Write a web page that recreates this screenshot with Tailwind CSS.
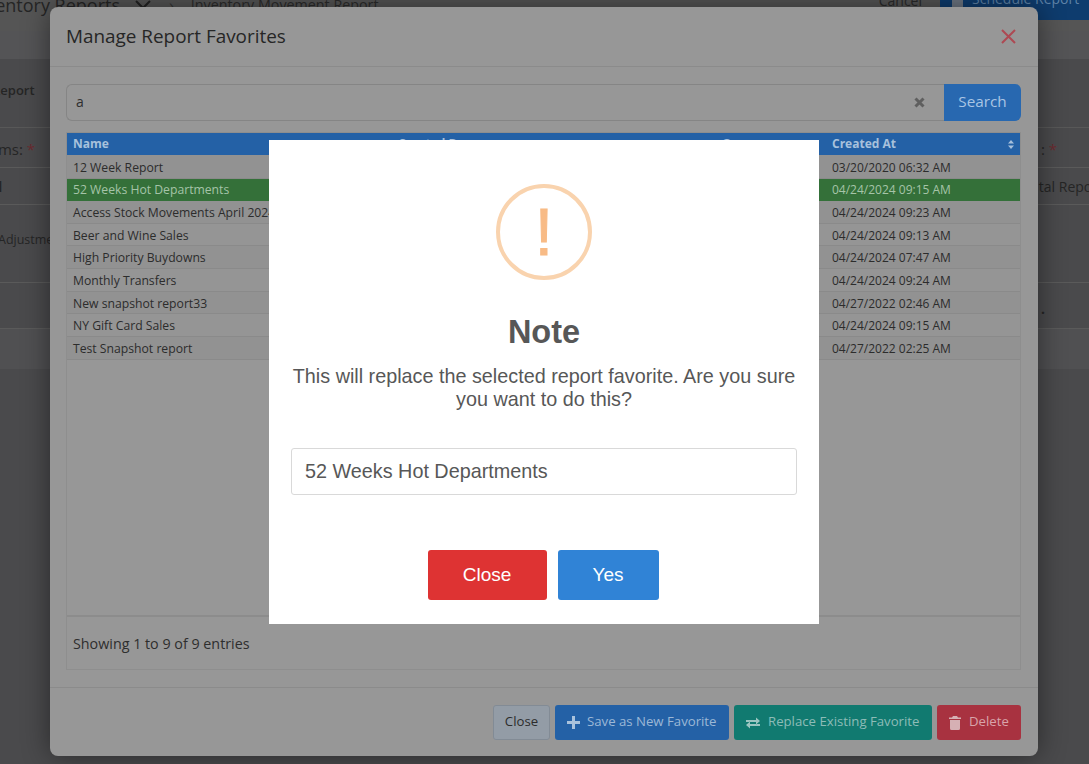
<!DOCTYPE html>
<html lang="en">
<head>
<meta charset="utf-8">
<title>Manage Report Favorites</title>
<script src="https://cdn.jsdelivr.net/npm/@tailwindcss/browser@4"></script>
</head>
<body class="m-0 bg-[#4a4a4c] font-['Open_Sans',sans-serif]">
<div class="relative w-[1089px] h-[764px] overflow-hidden bg-[#4a4a4c] text-[#252525]">

  <!-- dimmed page behind -->
  <div class="flex flex-col w-[1089px]">
    <div class="h-[31px] bg-[#555555] flex items-start justify-between overflow-hidden">
      <div class="flex items-center -mt-[9px] ml-[-38px] whitespace-nowrap">
        <span class="text-[18px] leading-[28px] w-[158px] text-right">Inventory Reports</span>
        <svg class="w-[16px] h-[10px] ml-[15px]" viewBox="0 0 16 10" fill="none" stroke="#222" stroke-width="2"><path d="M1 1l7 7 7-7"/></svg>
        <span class="ml-[18px] text-[#333]">›</span>
        <span class="ml-[17px] text-[14.300px] leading-[28px] text-[#2b2b2b]">Inventory Movement Report</span>
      </div>
      <div class="flex items-start whitespace-nowrap">
        <span class="text-[14px] leading-[20px] -mt-[9px] mr-[18px] text-[#2a2a2a]">Cancel</span>
        <span class="w-[149px] h-[20px] bg-[#0e3c6e] text-[#5f83a8] text-[14px] leading-[20px] overflow-hidden flex items-start">
          <span class="block ml-[12px] w-[11px] h-[7px] bg-[#6d7682] shrink-0"></span>
          <span class="block ml-[9px] -mt-[11px]">Schedule Report</span>
        </span>
      </div>
    </div>
    <div class="h-[28px] bg-[#545456]"></div>
    <div class="h-[69px] border-b border-[#585858] flex items-center text-[13px] font-semibold pb-[4px]"><span class="ml-[-8px]">Report</span></div>
    <div class="h-[40px] border-b border-[#5a5a5a] flex items-center justify-between text-[15px] leading-none pt-[4px]">
      <span class="ml-[-20px]">Items: <span class="text-[#6a2a30]">*</span></span>
      <span class="mr-[32px]">: <span class="text-[#6a2a30]">*</span></span>
    </div>
    <div class="h-[37px] border-b border-[#5a5a5a] flex items-center justify-between text-[14px] pt-[1px]">
      <span class="ml-[-2px] font-bold">l</span>
      <span class="mr-[-14px] whitespace-nowrap">tal Report</span>
    </div>
    <div class="h-[78px] border-b border-[#5a5a5a] text-[12.500px] pt-[26px] leading-[18px] whitespace-nowrap"><span class="ml-[-2px]">Adjustment</span></div>
    <div class="h-[46px] border-b border-[#5a5a5a] flex items-center justify-end text-[14px] font-bold pt-[6px]"><span class="mr-[44px]">.</span></div>
    <div class="h-[40px] bg-[#505052]"></div>
  </div>

  <!-- Manage Report Favorites modal -->
  <div class="absolute left-[50px] top-[7px] w-[988px] h-[749px] bg-[#979797] rounded-[8px] shadow-[0_0_28px_rgba(0,0,0,0.45)] flex flex-col">
    <div class="h-[60px] shrink-0 border-b border-[#8b8b8b] flex items-center justify-between pl-[16px] pr-[22px]">
      <h2 class="text-[18.900px] leading-none text-[#262626] font-normal">Manage Report Favorites</h2>
      <svg class="w-[15px] h-[15px]" viewBox="0 0 15 15" fill="none" stroke="#ad4953" stroke-width="2"><path d="M1 1l13 13M14 1L1 14"/></svg>
    </div>
    <div class="flex-1 flex flex-col pl-[16px] pr-[17px] pt-[17px]">
      <div class="flex h-[37px] shrink-0">
        <div class="flex-1 border border-[#858585] border-r-0 rounded-l-[6px] flex items-center justify-between pl-[9px] pr-[19px] text-[14px] text-[#2f2f2f]">
          <span class="-mt-[2px]">a</span>
          <svg class="w-[11px] h-[11px]" viewBox="0 0 11 11" fill="none" stroke="#5f5f5f" stroke-width="3"><path d="M1.500 1.500l8 8M9.500 1.500l-8 8"/></svg>
        </div>
        <button class="w-[77px] bg-[#2868b0] rounded-r-[6px] text-[#a9c5e4] text-[15.300px] pb-[2px]">Search</button>
      </div>
      <div class="mt-[11px] flex flex-col h-[538px] border border-[#8e8e8e]">
        <div class="grid grid-cols-[324px_326px_108px_1fr] h-[22px] bg-[#2461a6] text-[#a8c1dc] text-[12px] font-bold items-center shrink-0">
          <span class="pl-[6px]">Name</span>
          <span class="pl-[7px]">Created By</span>
          <span class="pl-[5px]">Owner</span>
          <span class="pl-[7px] flex items-center justify-between pr-[6px]">Created At
            <svg class="w-[6px] h-[9px]" viewBox="0 0 6 9" fill="#a8c1dc"><path d="M3 0l3 3.600H0zM3 9L0 5.400h6z"/></svg>
          </span>
        </div>
        <div class="grid grid-cols-[758px_1fr] h-[24px] items-center border-b border-[#8a8a8a] text-[12.200px] text-[#2c2c2c] bg-[#929292] pt-[3px]"><span class="pl-[6px]">12 Week Report</span><span class="pl-[7px] text-[12px]">03/20/2020 06:32 AM</span></div>
        <div class="grid grid-cols-[758px_1fr] h-[22px] items-center text-[12.200px] text-[#a5c4a8] bg-[#347039]"><span class="pl-[6px]">52 Weeks Hot Departments</span><span class="pl-[7px] text-[12px]">04/24/2024 09:15 AM</span></div>
        <div class="grid grid-cols-[758px_1fr] h-[23px] items-center border-b border-[#8a8a8a] text-[12.200px] text-[#2c2c2c] bg-[#929292] pt-[2px]"><span class="pl-[6px] whitespace-nowrap">Access Stock Movements April 2024</span><span class="pl-[7px] text-[12px]">04/24/2024 09:23 AM</span></div>
        <div class="grid grid-cols-[758px_1fr] h-[22px] items-center border-b border-[#8a8a8a] text-[12.200px] text-[#2c2c2c] bg-[#959595] pt-[3px]"><span class="pl-[6px]">Beer and Wine Sales</span><span class="pl-[7px] text-[12px]">04/24/2024 09:13 AM</span></div>
        <div class="grid grid-cols-[758px_1fr] h-[23px] items-center border-b border-[#8a8a8a] text-[12.200px] text-[#2c2c2c] bg-[#929292] pt-[2px]"><span class="pl-[6px]">High Priority Buydowns</span><span class="pl-[7px] text-[12px]">04/24/2024 07:47 AM</span></div>
        <div class="grid grid-cols-[758px_1fr] h-[23px] items-center border-b border-[#8a8a8a] text-[12.200px] text-[#2c2c2c] bg-[#959595] pt-[2px]"><span class="pl-[6px]">Monthly Transfers</span><span class="pl-[7px] text-[12px]">04/24/2024 09:24 AM</span></div>
        <div class="grid grid-cols-[758px_1fr] h-[22px] items-center border-b border-[#8a8a8a] text-[12.200px] text-[#2c2c2c] bg-[#929292] pt-[3px]"><span class="pl-[6px]">New snapshot report33</span><span class="pl-[7px] text-[12px]">04/27/2022 02:46 AM</span></div>
        <div class="grid grid-cols-[758px_1fr] h-[23px] items-center border-b border-[#8a8a8a] text-[12.200px] text-[#2c2c2c] bg-[#959595] pt-[2px]"><span class="pl-[6px]">NY Gift Card Sales</span><span class="pl-[7px] text-[12px]">04/24/2024 09:15 AM</span></div>
        <div class="grid grid-cols-[758px_1fr] h-[23px] items-center border-b border-[#8a8a8a] text-[12.200px] text-[#2c2c2c] bg-[#929292] pt-[2px]"><span class="pl-[6px]">Test Snapshot report</span><span class="pl-[7px] text-[12px]">04/27/2022 02:25 AM</span></div>
        <div class="flex-1"></div>
        <div class="h-[54px] shrink-0 border-t-2 border-[#8c8c8c] flex items-center pl-[6px] text-[14.300px] text-[#2e2e2e] pt-[2px]">Showing 1 to 9 of 9 entries</div>
      </div>
    </div>
    <div class="h-[69px] shrink-0 border-t border-[#8b8b8b] flex items-start justify-end gap-[5px] pr-[17px] pt-[17px] text-[13.200px]">
      <button class="h-[35px] w-[57px] rounded-[3px] border border-[#828b95] bg-[#939ca6] text-[#2c2c2c] pb-[2px]">Close</button>
      <button class="h-[35px] w-[174px] rounded-[3px] bg-[#2461a6] text-[#9cb8d6] flex items-center pl-[12px] gap-[7px] pb-[2px]">
        <svg class="w-[13px] h-[13px] mt-[2px]" viewBox="0 0 13 13" fill="#a9c2dc"><path d="M5 0h3v5h5v3H8v5H5V8H0V5h5z"/></svg>Save as New Favorite</button>
      <button class="h-[35px] w-[198px] rounded-[3px] bg-[#117a70] text-[#8dbcb7] flex items-center pl-[12px] gap-[8px] pb-[2px]">
        <svg class="w-[14px] h-[12px] mt-[2px]" viewBox="0 0 14 12" fill="#9cc6c1"><path d="M0 3h10V0.500L14 4l-4 3.500V5H0zM14 7H4V4.500L0 8l4 3.500V9h10z"/></svg>Replace Existing Favorite</button>
      <button class="h-[35px] w-[84px] rounded-[3px] bg-[#a83240] text-[#d8a4aa] flex items-center pl-[12px] gap-[8px] pb-[2px]">
        <svg class="w-[12px] h-[14px] mt-[2px]" viewBox="0 0 12 14" fill="#d6b0b4"><path d="M4 0h4l1 1.500h3V3H0V1.500h3zM1 4h10v8.500A1.500 1.500 0 0 1 9.500 14h-7A1.500 1.500 0 0 1 1 12.500z"/></svg>Delete</button>
    </div>
  </div>

  <!-- Note dialog -->
  <div class="absolute left-[269px] top-[140px] w-[550px] h-[484px] bg-white font-['Liberation_Sans',sans-serif] flex flex-col items-center text-[#575757]">
    <div class="mt-[44px] w-[96px] h-[96px] rounded-full border-4 border-[#f9d3ae] flex items-center justify-center">
      <span class="text-[66px] leading-none text-[#f8bb86] [-webkit-text-stroke:1px_#f8bb86]">!</span>
    </div>
    <h2 class="mt-[33px] text-[32.500px] leading-[38px] font-bold text-[#575757]">Note</h2>
    <p class="mt-[14px] w-[510px] text-center text-[19.800px] leading-[23px]">This will replace the selected report favorite. Are you sure you want to do this?</p>
    <div class="mt-[37px] w-[506px] h-[47px] rounded-[3px] border border-[#d9d9d9] flex items-center pl-[13px] text-[19.800px]">52 Weeks Hot Departments</div>
    <div class="mt-[55px] flex gap-[11px] -ml-[2px]">
      <button class="w-[119px] h-[50px] rounded-[3px] bg-[#de3333] text-white text-[19px]">Close</button>
      <button class="w-[101px] h-[50px] rounded-[3px] bg-[#3083d6] text-white text-[19px]">Yes</button>
    </div>
  </div>
</div>
</body>
</html>
